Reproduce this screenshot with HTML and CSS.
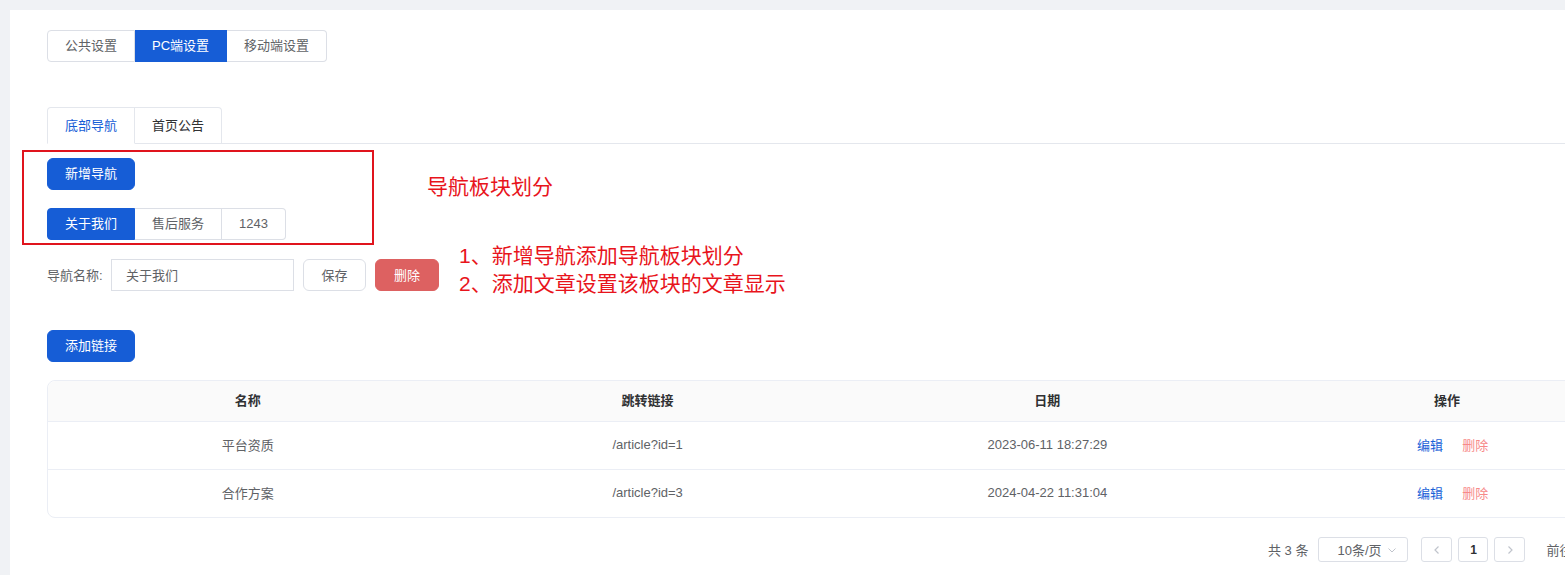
FILE: index.html
```html
<!DOCTYPE html>
<html lang="zh-CN">
<head>
    <meta charset="UTF-8">
    <title>PC端设置</title>
    <link rel="stylesheet" href="styles.css">
</head>
<body>
    <div class="panel">
        <div class="radio-group">
            <span class="radio">公共设置</span>
            <span class="radio active">PC端设置</span>
            <span class="radio">移动端设置</span>
        </div>

        <div class="tabs">
            <div class="tabs-header">
                <div class="tab active">底部导航</div>
                <div class="tab">首页公告</div>
            </div>
            <div class="tab-body">
                <button class="btn primary">新增导航</button>

                <div class="radio-group nav-group">
                    <span class="radio active">关于我们</span>
                    <span class="radio">售后服务</span>
                    <span class="radio">1243</span>
                </div>

                <div class="form-row">
                    <label class="label">导航名称:</label>
                    <input class="input" type="text" value="关于我们">
                    <button class="btn plain">保存</button>
                    <button class="btn danger">删除</button>
                </div>

                <button class="btn primary add-link">添加链接</button>

                <table class="links">
                    <thead>
                        <tr>
                            <th>名称</th>
                            <th>跳转链接</th>
                            <th>日期</th>
                            <th>操作</th>
                        </tr>
                    </thead>
                    <tbody>
                        <tr>
                            <td>平台资质</td>
                            <td>/article?id=1</td>
                            <td>2023-06-11 18:27:29</td>
                            <td class="ops"><a class="op edit">编辑</a><a class="op del">删除</a></td>
                        </tr>
                        <tr>
                            <td>合作方案</td>
                            <td>/article?id=3</td>
                            <td>2024-04-22 11:31:04</td>
                            <td class="ops"><a class="op edit">编辑</a><a class="op del">删除</a></td>
                        </tr>
                    </tbody>
                </table>

                <div class="pager">
                    <span class="total">共 3 条</span>
                    <span class="sizes">10条/页
                        <svg width="10" height="10" viewBox="0 0 10 10"><path d="M1.5 3.5 L5 7 L8.5 3.5" fill="none" stroke="#c0c4cc" stroke-width="1"/></svg>
                    </span>
                    <span class="pbtn"><svg width="10" height="10" viewBox="0 0 10 10"><path d="M6.5 1.5 L3 5 L6.5 8.5" fill="none" stroke="#c0c4cc" stroke-width="1.2"/></svg></span>
                    <span class="pbtn num">1</span>
                    <span class="pbtn"><svg width="10" height="10" viewBox="0 0 10 10"><path d="M3.5 1.5 L7 5 L3.5 8.5" fill="none" stroke="#c0c4cc" stroke-width="1.2"/></svg></span>
                    <span class="jump">前往 <span class="jump-input">1</span> 页</span>
                </div>
            </div>
        </div>

        <!-- 标注 -->
        <div class="mark-box"></div>
        <div class="note note-title">导航板块划分</div>
        <div class="note note-list">1、新增导航添加导航板块划分<br>2、添加文章设置该板块的文章显示</div>
    </div>
</body>
</html>
```

FILE: styles.css
```css
html, body {
    margin: 0;
    padding: 0;
    overflow: hidden;
}
body {
    background-color: #f0f2f5;
    font-family: "Liberation Sans", "Noto Sans CJK SC", sans-serif;
    font-size: 13px;
    color: #606266;
    width: 1565px;
    height: 575px;
}
.panel {
    position: relative;
    margin: 10px 0 0 10px;
    padding: 20px 0 20px 37px;
    width: 1640px;
    background: #fff;
    min-height: 600px;
}
.radio-group {
    display: flex;
    width: max-content;
}
.radio {
    height: 32px;
    line-height: 29px;
    padding: 0 17px;
    border: 1px solid #dcdfe6;
    border-left: none;
    color: #606266;
    background: #fff;
}
.radio:first-child {
    border-left: 1px solid #dcdfe6;
    border-radius: 4px 0 0 4px;
}
.radio:last-child {
    border-radius: 0 4px 4px 0;
}
.radio.active {
    background: #165dd6;
    border-color: #165dd6;
    color: #fff;
}
.radio, .tab, .btn, .input {
    box-sizing: border-box;
}
.tabs {
    margin-top: 45px;
}
.tabs-header {
    display: flex;
    border-bottom: 1px solid #e4e7ed;
}
.tab {
    height: 37px;
    line-height: 35px;
    padding: 0 17px;
    margin-bottom: -1px;
    border: 1px solid #e4e7ed;
    border-left: none;
    color: #303133;
}
.tab:first-child {
    border-left: 1px solid #e4e7ed;
    border-radius: 4px 0 0 0;
}
.tab:last-child {
    border-radius: 0 4px 0 0;
}
.tab.active {
    color: #165dd6;
    border-bottom-color: #fff;
}
.tab-body {
    padding-top: 14px;
}
.btn {
    display: inline-block;
    height: 32px;
    padding: 0 18px 2px;
    border-radius: 6px;
    border: 1px solid #dcdfe6;
    font-family: inherit;
    font-size: 13px;
    cursor: pointer;
    background: #fff;
    color: #606266;
}
.btn.primary {
    background: #165dd6;
    border-color: #165dd6;
    color: #fff;
    width: 88px;
    padding: 0 0 3px;
}
.btn.danger {
    background: #dd6161;
    border-color: #dd6161;
    color: #fff;
    width: 64px;
    padding: 0 0 2px;
}
.btn.plain {
    width: 63px;
    padding: 0 0 2px;
    margin-left: 9px;
    margin-right: 9px;
}
.nav-group {
    margin-top: 18px;
}
.form-row {
    display: flex;
    align-items: center;
    margin-top: 19px;
}
.label {
    width: 64px;
    color: #606266;
    padding-bottom: 2px;
}
.input {
    width: 183px;
    height: 32px;
    padding: 0 14px 2px;
    border: 1px solid #dcdfe6;
    border-radius: 0;
    font-family: inherit;
    font-size: 13px;
    color: #606266;
    outline: none;
}
.add-link {
    margin-top: 39px;
    display: block;
}
.links {
    margin-top: 18px;
    width: 1601px;
    table-layout: fixed;
    border-collapse: separate;
    border-spacing: 0;
    border: 1px solid #ebeef5;
    border-radius: 8px;
}
.links th, .links td {
    text-align: center;
    border-bottom: 1px solid #ebeef5;
    padding: 0 0 3px;
}
.links th {
    height: 37px;
    background: #fafafa;
    color: #303133;
    font-weight: bold;
    border-radius: 0;
}
.links thead th:first-child {
    border-top-left-radius: 8px;
}
.links td {
    height: 44px;
    color: #606266;
}
.links td.ops {
    padding-left: 12px;
}
.links tbody tr:last-child td {
    border-bottom: none;
}
.op {
    margin: 0 10px 0 9px;
    cursor: pointer;
}
.op.edit {
    color: #1a62d8;
}
.op.del {
    color: #f78989;
}
.pager {
    display: flex;
    align-items: center;
    margin-top: 19px;
    padding-left: 1221px;
    height: 25px;
    color: #606266;
}
.total {
    margin-right: 10px;
}
.sizes {
    box-sizing: border-box;
    width: 90px;
    height: 25px;
    border: 1px solid #dcdfe6;
    border-radius: 3px;
    display: flex;
    align-items: center;
    justify-content: space-between;
    padding: 0 10px 0 18px;
    margin-right: 13px;
}
.pbtn {
    box-sizing: border-box;
    width: 31px;
    height: 25px;
    border: 1px solid #dcdfe6;
    border-radius: 3px;
    display: flex;
    align-items: center;
    justify-content: center;
    margin-right: 6px;
}
.pbtn.num {
    width: 30px;
    color: #303133;
    font-weight: bold;
    font-size: 12px;
}
.jump {
    margin-left: 15px;
    display: flex;
    align-items: center;
    gap: 6px;
}
.jump-input {
    box-sizing: border-box;
    width: 46px;
    height: 25px;
    border: 1px solid #dcdfe6;
    border-radius: 3px;
    text-align: center;
    line-height: 23px;
}
.mark-box {
    position: absolute;
    left: 12px;
    top: 140px;
    width: 352px;
    height: 95px;
    box-sizing: border-box;
    border: 2px solid #e0141d;
}
.note {
    position: absolute;
    color: #e8141c;
    font-size: 21px;
    line-height: 28px;
}
.note-title {
    left: 417px;
    top: 163px;
}
.note-list {
    left: 449px;
    top: 232px;
}
```
